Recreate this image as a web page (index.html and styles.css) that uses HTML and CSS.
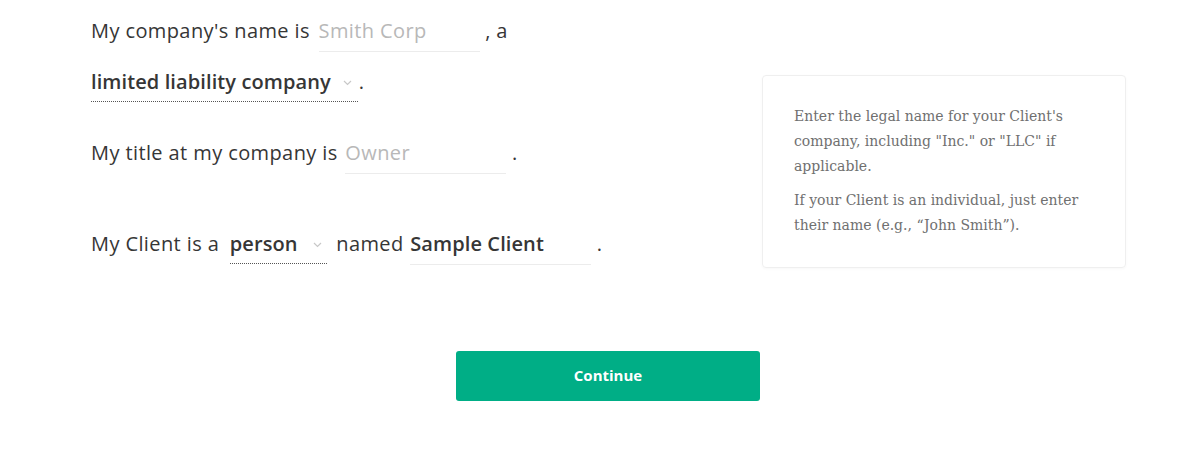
FILE: index.html
```html
<!DOCTYPE html>
<html>
<head>
<meta charset="utf-8">
<link rel="stylesheet" href="styles.css">
</head>
<body>
<div class="page">
  <div class="content">
    <form class="form">
      <p class="row row-first">My company's name is <input class="field" type="text" placeholder="Smith Corp"> , a<br>
        <span class="select select-wide">limited liability company<svg class="chev" width="9" height="6" viewBox="0 0 9 6"><path d="M1 1l3.5 3.5L8 1" fill="none" stroke="#c8c8c8" stroke-width="1.2"/></svg></span>.</p>
      <p class="row row-title">My title at my company is <input class="field field-title" type="text" placeholder="Owner"> .</p>
      <p class="row row-client">My Client is a <span class="select select-person">person<svg class="chev" width="9" height="6" viewBox="0 0 9 6"><path d="M1 1l3.5 3.5L8 1" fill="none" stroke="#c8c8c8" stroke-width="1.2"/></svg></span> named <input class="field field-client" type="text" value="Sample Client"> .</p>
    </form>
    <aside class="card">
      <p>Enter the legal name for your Client's company, including "Inc." or "LLC" if applicable.</p>
      <p>If your Client is an individual, just enter their name (e.g., “John Smith”).</p>
    </aside>
  </div>
  <div class="actions">
    <button class="btn" type="button">Continue</button>
  </div>
</div>
</body>
</html>
```

FILE: styles.css
```css
* { box-sizing: border-box; }
html, body { margin: 0; padding: 0; background: #fff; }
body { font-family: "Open Sans", "Lato", sans-serif; color: #363636; }

.page { width: 1200px; height: 452px; }

.content {
  display: flex;
  padding-left: 91px;
  padding-top: 5px;
}

.form { width: 671px; }

.row {
  margin: 0;
  font-size: 20px;
  line-height: 51px;
  letter-spacing: 0.4px;
}
.row-title { margin-top: 20px; }
.row-client { margin-top: 40px; }

.field {
  font-family: inherit;
  font-size: 20px;
  letter-spacing: 0.1px;
  border: none;
  border-bottom: 1px solid #ececec;
  outline: none;
  width: 161px;
  padding: 0 0 7px 0;
  margin: 0 0 0 3px;
  background: transparent;
  color: #363636;
  font-weight: 600;
  vertical-align: baseline;
}
.field::placeholder { color: #b8b8b8; font-weight: 400; letter-spacing: 0.4px; }
.field-title { margin-left: 2px; }
.field-client { width: 181px; margin-left: 1px; }

.select {
  display: inline-block;
  font-weight: 600;
  letter-spacing: 0.1px;
  line-height: 28px;
  padding-bottom: 5px;
  padding-right: 6px;
  border-bottom: 1px dotted #555;
  margin-right: 1px;
}
.select-person { margin-left: 5px; margin-right: 4px; padding-right: 5px; }
.select-person .chev { margin-left: 15px; }
.chev { margin-left: 12px; vertical-align: middle; position: relative; top: -1px; }

.card {
  margin-top: 70px;
  width: 364px;
  height: 193px;
  border: 1px solid #efefef;
  border-radius: 4px;
  box-shadow: 0 1px 3px rgba(0,0,0,0.03);
  padding: 28px 30px 0 31px;
  font-family: "DejaVu Serif", "Liberation Serif", serif;
  font-size: 14px;
  line-height: 25px;
  color: #707070;
}
.card p { margin: 0 0 9px 0; }

.actions {
  display: flex;
  justify-content: center;
  padding-left: 16px;
  margin-top: 82px;
}
.btn {
  width: 304px;
  height: 50px;
  padding-bottom: 4px;
  background: #00ae86;
  color: #fff;
  border: none;
  border-radius: 3px;
  font-family: "Open Sans", "Lato", sans-serif;
  font-weight: 700;
  font-size: 15px;
}
```
